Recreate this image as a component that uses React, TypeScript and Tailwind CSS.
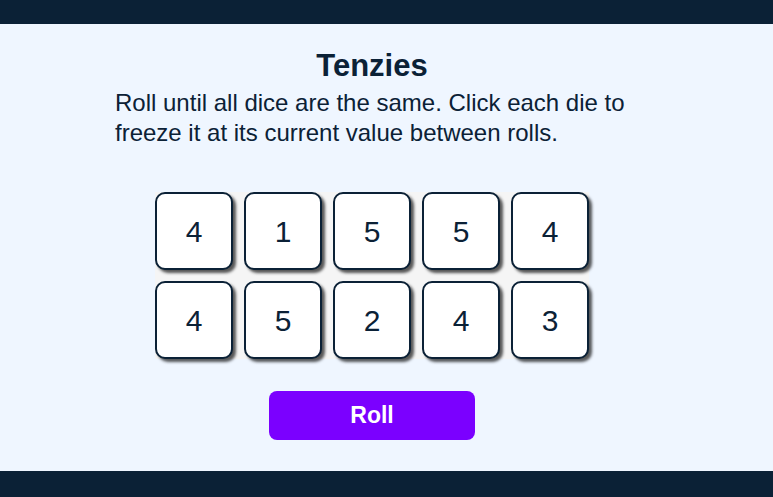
import { useState } from 'react';

const startDice = [4, 1, 5, 5, 4, 4, 5, 2, 4, 3];

export default function App() {
    const [dice] = useState<number[]>(startDice);

    return (
        <div className="min-h-screen bg-[#0b2136] pt-[24px] font-['Liberation_Sans',Arial,sans-serif] text-[#0b2136]">
            <main className="h-[447px] bg-[#eff6ff]">
                <div className="w-[744px] flex flex-col items-center pt-[24px]">
                    <h1 className="text-[31px] font-bold leading-[36px]">Tenzies</h1>
                    <p className="mt-[4px] ml-[6px] w-[520px] text-[24px] leading-[30px]">
                        Roll until all dice are the same. Click each die to freeze it at its current value between rolls.
                    </p>
                    <div className="mt-[44px] grid grid-cols-5 gap-[11px] bg-[#f5f5f5]">
                        {dice.map((value, i) => (
                            <button
                                key={i}
                                className="w-[78px] h-[78px] flex items-center justify-center bg-white border-2 border-[#0b2136] rounded-[10px] shadow-[3px_3px_3px_rgba(0,0,0,0.65)] text-[30px]"
                            >
                                {value}
                            </button>
                        ))}
                    </div>
                    <button className="mt-[32px] w-[206px] h-[49px] rounded-[8px] bg-[#7b00ff] text-white text-[23px] font-bold">
                        Roll
                    </button>
                </div>
            </main>
        </div>
    );
}
